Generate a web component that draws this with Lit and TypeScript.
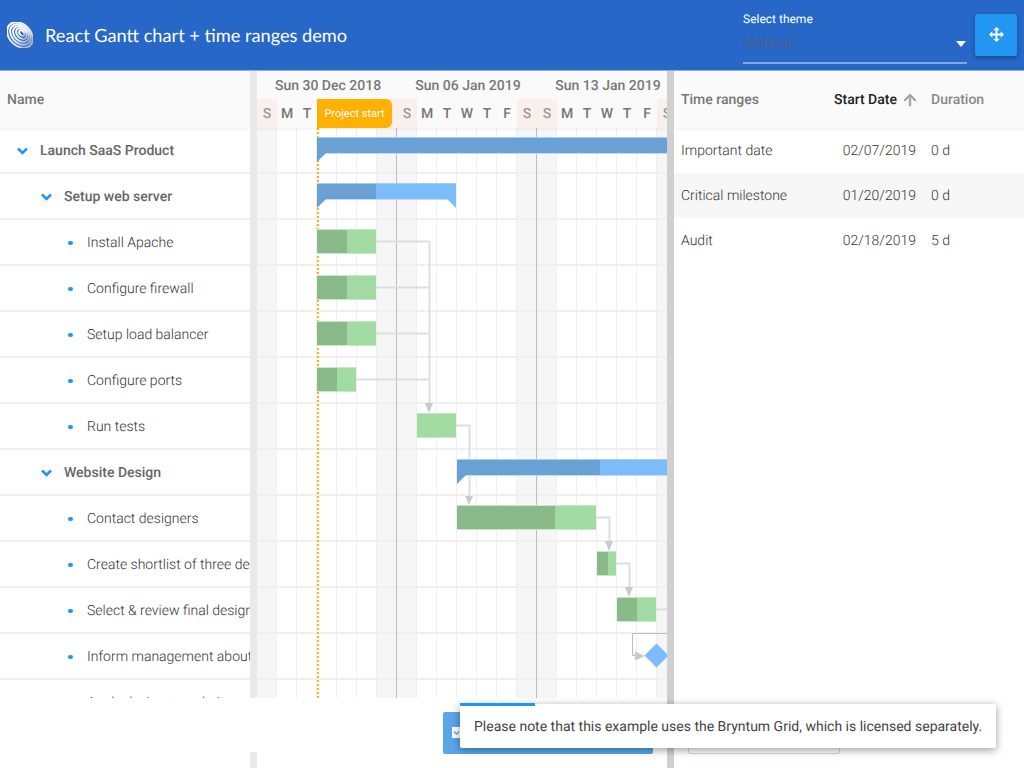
import { LitElement, html, css, svg } from "lit";
import { customElement } from "lit/decorators.js";

const ROW_H = 46;
const COL_W = 20;
const DAY_LETTERS = ["S", "M", "T", "W", "T", "F", "S"];

interface TreeRow {
  name: string;
  level: number;
  parent?: boolean;
}

const TREE: TreeRow[] = [
  { name: "Launch SaaS Product", level: 0, parent: true },
  { name: "Setup web server", level: 1, parent: true },
  { name: "Install Apache", level: 2 },
  { name: "Configure firewall", level: 2 },
  { name: "Setup load balancer", level: 2 },
  { name: "Configure ports", level: 2 },
  { name: "Run tests", level: 2 },
  { name: "Website Design", level: 1, parent: true },
  { name: "Contact designers", level: 2 },
  { name: "Create shortlist of three designers", level: 2 },
  { name: "Select & review final design", level: 2 },
  { name: "Inform management about decision", level: 2 },
  { name: "Apply design to website", level: 2 },
];

// x positions are relative to the timeline, in px
const TASKS = [
  { row: 2, x: 60, w: 59, done: 30 },
  { row: 3, x: 60, w: 59, done: 30 },
  { row: 4, x: 60, w: 59, done: 30 },
  { row: 5, x: 60, w: 39, done: 20 },
  { row: 6, x: 160, w: 39, done: 0 },
  { row: 8, x: 200, w: 139, done: 98 },
  { row: 9, x: 340, w: 19, done: 11 },
  { row: 10, x: 360, w: 39, done: 20 },
];

const PARENTS = [
  { row: 0, x: 60, w: 360, done: 360, rightLeg: false },
  { row: 1, x: 60, w: 139, done: 59, rightLeg: true },
  { row: 7, x: 200, w: 220, done: 143, rightLeg: false },
];

const TIME_RANGES = [
  { name: "Important date", start: "02/07/2019", duration: "0 d" },
  { name: "Critical milestone", start: "01/20/2019", duration: "0 d" },
  { name: "Audit", start: "02/18/2019", duration: "5 d" },
];

@customElement("app-root")
export class AppRoot extends LitElement {
  static styles = css`
    :host {
      display: block;
      position: relative;
      width: 1024px;
      height: 768px;
      overflow: hidden;
      background: #fff;
      font-family: Roboto, "Liberation Sans", sans-serif;
      font-size: 14px;
      text-rendering: geometricPrecision;
    }

    header {
      display: flex;
      align-items: center;
      box-sizing: border-box;
      height: 71px;
      padding: 0 7px;
      background: #2767c8;
      border-bottom: 1px solid #8fb0e6;
    }

    .logo {
      width: 26px;
      height: 26px;
      flex: none;
    }

    h1 {
      flex: 1;
      margin: 0 0 0 12px;
      font: 400 18.2px Lato, sans-serif;
      color: #fff;
    }

    .theme {
      align-self: flex-start;
      width: 224px;
      height: 64px;
      box-sizing: border-box;
      padding-top: 12px;
      border-bottom: 2px solid #86a8de;
      position: relative;
    }

    .theme label {
      display: block;
      font-size: 12px;
      line-height: 14px;
      color: #fff;
    }

    .theme .value {
      margin-top: 9px;
      line-height: 16px;
      color: #46608c;
    }

    .caret {
      position: absolute;
      right: 1px;
      top: 41px;
      border-top: 6px solid #fff;
      border-left: 5.5px solid transparent;
      border-right: 5.5px solid transparent;
    }

    .move {
      display: flex;
      align-items: center;
      justify-content: center;
      width: 42px;
      height: 42px;
      margin: 0 0 0 8px;
      border-radius: 2px;
      background: #2196f3;
      box-shadow: 0 2px 4px rgba(0, 0, 0, 0.3);
    }

    .move svg {
      width: 15px;
      height: 15px;
      fill: #fff;
      margin-top: -1px;
    }

    main {
      display: flex;
      height: 697px;
    }

    .head {
      display: flex;
      align-items: center;
      box-sizing: border-box;
      height: 57px;
      background: #fafafa;
      font-weight: 500;
      color: #777;
      box-shadow: 0 1px 3px rgba(0, 0, 0, 0.07);
      position: relative;
      z-index: 3;
    }

    .tree {
      width: 250px;
      flex: none;
      overflow: hidden;
    }

    .tree .head {
      padding-left: 7px;
    }

    .tree-row {
      display: flex;
      align-items: center;
      box-sizing: border-box;
      height: ${ROW_H}px;
      padding-top: 2px;
      border-bottom: 2px solid #f0f0f0;
      white-space: nowrap;
      font-weight: 300;
      color: #333;
    }

    .tree-row.parent {
      font-weight: 500;
      color: #666;
    }

    .tree-row .mark {
      display: flex;
      align-items: center;
      justify-content: center;
      flex: none;
      width: 11px;
      margin-right: 12px;
    }

    .tree-row .mark.leaf {
      width: 5px;
      margin-right: 14px;
    }

    .tree-row .mark svg {
      width: 11px;
      height: 8px;
      fill: none;
      stroke: #2196f3;
      stroke-width: 2.6;
    }

    .tree-row .dot {
      width: 4.5px;
      height: 4.5px;
      border-radius: 50%;
      background: #2196f3;
    }

    .splitter {
      width: 7px;
      flex: none;
      background: #e9e9e9;
    }

    .splitter.dark {
      background: #d0d0d0;
      position: relative;
      z-index: 4;
      height: 697px;
    }

    .bottom-split {
      position: absolute;
      top: 698px;
      height: 70px;
    }

    .bottom-split.dark {
      position: absolute;
      height: 70px;
    }

    .timeline {
      width: 410px;
      flex: none;
      overflow: hidden;
      position: relative;
    }

    .timeline .head {
      display: block;
    }

    .weeks {
      display: flex;
      box-sizing: border-box;
      height: 28px;
      padding-top: 2px;
      align-items: center;
    }

    .weeks div {
      flex: none;
      width: ${COL_W * 7}px;
      text-align: center;
      padding-left: 2px;
      box-sizing: border-box;
      white-space: nowrap;
    }

    .days {
      display: flex;
      height: 29px;
    }

    .days div {
      flex: none;
      display: flex;
      align-items: center;
      justify-content: center;
      width: ${COL_W}px;
    }

    .days div.off {
      background: #f9f0ee;
      color: #999;
    }

    .canvas {
      position: relative;
      height: 570px;
      overflow: hidden;
    }

    .cols {
      display: flex;
      position: absolute;
      inset: 0;
    }

    .cols div {
      flex: none;
      box-sizing: border-box;
      width: ${COL_W}px;
      border-right: 1px solid #eeeeee;
    }

    .cols div.off {
      background: #f6f6f6;
    }

    .lines {
      position: absolute;
      inset: 0;
    }

    .lines div {
      box-sizing: border-box;
      height: ${ROW_H}px;
      border-bottom: 2px solid #f0f0f0;
    }

    .marker {
      position: absolute;
      top: 0;
      bottom: 0;
      width: 1px;
      background: #bdbdbd;
    }

    .start-line {
      position: absolute;
      top: 0;
      bottom: 0;
      left: 60px;
      width: 2px;
      background: repeating-linear-gradient(#ffb300 0 2.5px, transparent 2.5px 4px);
    }

    .start-label {
      position: absolute;
      left: 60px;
      top: 28px;
      z-index: 5;
      box-sizing: border-box;
      width: 75px;
      height: 29px;
      display: flex;
      align-items: center;
      justify-content: center;
      border-radius: 0 6px 6px 0;
      background: #ffb000;
      color: #fff;
      font-size: 11px;
      font-weight: 400;
    }

    .deps {
      position: absolute;
      left: 0;
      top: 0;
      width: 410px;
      height: 570px;
    }

    .task {
      position: absolute;
      box-sizing: border-box;
      height: 25px;
      background: #a2dba2;
      border-top: 1px solid #c6e9c6;
      border-bottom: 1px solid #c6e9c6;
    }

    .task span {
      display: block;
      height: 100%;
      background: #8ab98a;
    }

    .summary {
      position: absolute;
      box-sizing: border-box;
      height: 17px;
      background: #7dbcfb;
      border-top: 1px solid #a5cdf5;
      border-bottom: 1px solid #c2dcf5;
    }

    .summary span {
      display: block;
      height: 100%;
      background: #6aa1d5;
    }

    .summary::before {
      content: "";
      position: absolute;
      left: 0;
      top: 15px;
      border-top: 9px solid #6aa1d5;
      border-right: 9px solid transparent;
    }

    .summary.right::after {
      content: "";
      position: absolute;
      right: 0;
      top: 15px;
      border-top: 9px solid #7dbcfb;
      border-left: 9px solid transparent;
    }

    .milestone {
      position: absolute;
      width: 17px;
      height: 17px;
      background: #7dbcfb;
      transform: rotate(45deg);
    }

    .ranges {
      flex: 1;
    }

    .grid-row {
      display: grid;
      grid-template-columns: 153px 97px 1fr;
      align-items: center;
    }

    .grid-row > * {
      padding-left: 7px;
    }

    .head .sorted {
      display: flex;
      align-items: center;
      color: #222;
      white-space: nowrap;
    }

    .head .sorted svg {
      width: 18px;
      height: 18px;
      margin-left: 4px;
      flex: none;
      fill: #a3a3a3;
      stroke: #a3a3a3;
      stroke-width: 1.2;
    }

    .head.grid-row {
      display: grid;
    }

    .head .muted {
      color: #888;
    }

    .range-row {
      box-sizing: border-box;
      height: 45px;
      padding-top: 1px;
      font-weight: 300;
      color: #333;
    }

    .range-row:nth-child(even) {
      background: #f7f7f7;
    }

    .range-row .date {
      padding: 0 8px 0 0;
      text-align: right;
    }

    .tools {
      position: absolute;
      left: 0;
      right: 0;
      top: 698px;
      display: flex;
      align-items: flex-start;
      box-sizing: border-box;
      height: 56px;
      padding: 14px 0 0 443px;
      gap: 35px;
      z-index: 6;
    }

    .tools::before {
      content: "";
      position: absolute;
      left: 0;
      top: 0;
      width: 667px;
      height: 54px;
      background: #fff;
    }

    .tool-btn {
      position: relative;
      box-sizing: border-box;
      height: 42px;
      border-radius: 2px;
    }

    .tool-btn.blue {
      width: 210px;
      background: #5aa6e8;
      padding: 15px 0 0 9px;
    }

    .tool-btn.blue svg {
      display: block;
      width: 9px;
      height: 11px;
    }

    .tool-btn.green {
      width: 152px;
      border: 1px solid #c5e5c5;
      background: #fff;
    }

    .toast {
      position: absolute;
      left: 460px;
      top: 704px;
      z-index: 7;
      box-sizing: border-box;
      width: 536px;
      height: 44px;
      padding: 2px 0 0 14px;
      display: flex;
      align-items: center;
      background: #fff;
      border-radius: 2px;
      color: #444;
      box-shadow: 0 2px 8px rgba(0, 0, 0, 0.4);
      white-space: nowrap;
    }

    .toast .progress {
      position: absolute;
      left: 0;
      top: -1px;
      width: 75px;
      height: 3px;
      background: #2196f3;
    }
  `;

  private _logo() {
    const rings = [
      { rx: 14.6, ry: 10.8 },
      { rx: 11.8, ry: 8.6 },
      { rx: 9, ry: 6.5 },
      { rx: 6.2, ry: 4.3 },
      { rx: 3.2, ry: 2.1 },
    ];
    return html`<svg class="logo" viewBox="1 1 26 26">
      <defs>
        <linearGradient id="ring" x1="0" y1="0" x2="1" y2="0">
          <stop offset="0" stop-color="#ffffff" />
          <stop offset="0.6" stop-color="#e4e9f1" />
          <stop offset="1" stop-color="#9fb0c9" />
        </linearGradient>
      </defs>
      <g transform="rotate(45 14 14)" fill="none" stroke="url(#ring)" stroke-width="2">
        ${rings.map(
          (r) => svg`<ellipse cx="14" cy=${14 - (10.8 - r.ry) * 0.3} rx=${r.rx} ry=${r.ry} />`
        )}
      </g>
    </svg>`;
  }

  private _treeRow(row: TreeRow) {
    const markLeft = [17, 41, 68][row.level];
    return html`<div
      class="tree-row ${row.parent ? "parent" : ""}"
      style="padding-left:${markLeft}px"
    >
      ${row.parent
        ? html`<span class="mark">
            <svg viewBox="0 0 11 8"><path d="M1 1.5 L5.5 6 L10 1.5" /></svg>
          </span>`
        : html`<span class="mark leaf"><span class="dot"></span></span>`}
      ${row.name}
    </div>`;
  }

  private _deps() {
    // [x1, y1, ...] polylines, relative to the canvas
    const soft = [
      "119,113.5 172.5,113.5",
      "119,159.5 172.5,159.5",
      "119,205.5 172.5,205.5",
      "99,251.5 172.5,251.5",
      "172.5,113.5 172.5,276",
      "199,297.5 212.5,297.5 212.5,368",
      "339,389.5 352.5,389.5 352.5,414",
      "359,435.5 372.5,435.5 372.5,460",
      "399,481.5 410,481.5",
    ];
    const arrows = [
      "168,275 176,275 172,285",
      "208,368 216,368 212,377",
      "348,413 356,413 352,423",
      "368,459 376,459 372,469",
    ];
    return svg`<svg class="deps" viewBox="0 0 410 570">
      ${soft.map(
        (p) => svg`<polyline points=${p} fill="none" stroke="#dedede" stroke-width="2" />`
      )}
      <polyline points="410,505.5 375.5,505.5 375.5,527.5 380,527.5" fill="none" stroke="#bdbdbd" stroke-width="1" />
      ${arrows.map((p) => svg`<polygon points=${p} fill="#c9c9c9" />`)}
      <polygon points="378,523.5 378,532.5 388,528" fill="#c9c9c9" />
    </svg>`;
  }

  render() {
    const dayCount = 21;
    const days = Array.from({ length: dayCount }, (_, i) => DAY_LETTERS[i % 7]);
    const isOff = (i: number) => i % 7 === 0 || i % 7 === 6;
    // the "Project start" label lies over these header cells
    const underLabel = (i: number) => i >= 3 && i <= 6;

    return html`
      <header>
        ${this._logo()}
        <h1>React Gantt chart + time ranges demo</h1>
        <div class="theme">
          <label>Select theme</label>
          <div class="value">Material</div>
          <span class="caret"></span>
        </div>
        <div class="move">
          <svg viewBox="0 0 16 16">
            <path
              d="M8 0 L11.5 3.5 H9 V7 H12.5 V4.5 L16 8 L12.5 11.5 V9 H9 V12.5 H11.5 L8 16 L4.5 12.5 H7 V9 H3.5 V11.5 L0 8 L3.5 4.5 V7 H7 V3.5 H4.5 Z"
            />
          </svg>
        </div>
      </header>

      <main>
        <section class="tree">
          <div class="head">Name</div>
          ${TREE.map((r) => this._treeRow(r))}
        </section>
        <div class="splitter"></div>

        <section class="timeline">
          <div class="head">
            <div class="weeks">
              <div>Sun 30 Dec 2018</div>
              <div>Sun 06 Jan 2019</div>
              <div>Sun 13 Jan 2019</div>
            </div>
            <div class="days">
              ${days.map(
                (d, i) => html`<div class=${isOff(i) ? "off" : ""}>${underLabel(i) ? "" : d}</div>`
              )}
            </div>
            <div class="start-label">Project start</div>
          </div>
          <div class="canvas">
            <div class="cols">
              ${days.map((_, i) => html`<div class=${isOff(i) ? "off" : ""}></div>`)}
            </div>
            <div class="lines">${TREE.map(() => html`<div></div>`)}</div>
            <div class="marker" style="left:139px"></div>
            <div class="marker" style="left:279px"></div>
            <div class="start-line"></div>
            ${this._deps()}
            ${PARENTS.map(
              (p) => html`<div
                class="summary ${p.rightLeg ? "right" : ""}"
                style="left:${p.x}px;top:${p.row * ROW_H + 9}px;width:${p.w}px"
              >
                <span style="width:${p.done}px"></span>
              </div>`
            )}
            ${TASKS.map(
              (t) => html`<div
                class="task"
                style="left:${t.x}px;top:${t.row * ROW_H + 9}px;width:${t.w}px"
              >
                <span style="width:${t.done}px"></span>
              </div>`
            )}
            <div class="milestone" style="left:391px;top:519px"></div>
          </div>
        </section>
        <div class="splitter dark"></div>

        <section class="ranges">
          <div class="head grid-row">
            <span>Time ranges</span>
            <span class="sorted">
              Start Date
              <svg viewBox="0 0 24 24">
                <path d="M4 12l1.41 1.41L11 7.83V20h2V7.83l5.58 5.59L20 12l-8-8-8 8z" />
              </svg>
            </span>
            <span class="muted">Duration</span>
          </div>
          <div>
            ${TIME_RANGES.map(
              (r) => html`<div class="grid-row range-row">
                <span>${r.name}</span>
                <span class="date">${r.start}</span>
                <span>${r.duration}</span>
              </div>`
            )}
          </div>
        </section>
      </main>

      <div class="splitter dark bottom-split" style="left:667px"></div>
      <div class="splitter bottom-split" style="left:250px"></div>

      <div class="tools">
        <div class="tool-btn blue">
          <svg viewBox="0 0 9 11">
            <rect width="9" height="11" fill="#fff" />
            <path d="M2 4.5 L4.5 7 L7 4.5" fill="none" stroke="#5aa6e8" stroke-width="1.4" />
          </svg>
        </div>
        <div class="tool-btn green"></div>
      </div>

      <div class="toast">
        <span class="progress"></span>
        Please note that this example uses the Bryntum Grid, which is licensed separately.
      </div>
    `;
  }
}

declare global {
  interface HTMLElementTagNameMap {
    "app-root": AppRoot;
  }
}
